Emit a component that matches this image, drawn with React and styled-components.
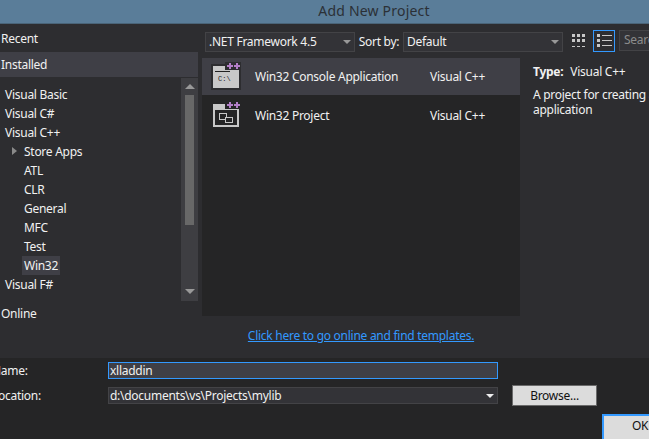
import React from "react";
import styled, { createGlobalStyle } from "styled-components";

const Global = createGlobalStyle`
  html, body { margin: 0; padding: 0; background: #2d2d30; }
  #root { width: 649px; height: 439px; overflow: hidden; }
`;

const Page = styled.div`
  width: 649px;
  height: 439px;
  overflow: hidden;
  display: flex;
  flex-direction: column;
  font-family: "Noto Sans", "Open Sans", sans-serif;
  font-size: 12px;
  letter-spacing: -0.27px;
  line-height: 16px;
  color: #f1f1f1;
  background: #2d2d30;
`;

const TitleBar = styled.header`
  height: 24px;
  flex: none;
  box-sizing: border-box;
  background: #5a7d99;
  border-bottom: 1px solid #4a6478;
  color: #2b3036;
  font-size: 14px;
  letter-spacing: 0.2px;
  line-height: 22px;
  text-align: center;
  padding-left: 99px;
`;

const Main = styled.main`
  height: 334px;
  flex: none;
  display: flex;
`;

const Sidebar = styled.nav`
  width: 198px;
  flex: none;
  display: flex;
  flex-direction: column;
  padding-top: 4px;
`;

const Section = styled.div`
  height: ${(p) => p.$h}px;
  flex: none;
  box-sizing: border-box;
  padding-left: 1px;
  padding-bottom: ${(p) => p.$pb || 0}px;
  display: flex;
  align-items: center;
  background: ${(p) => (p.$active ? "#3f3f46" : "transparent")};
`;

const TreeWrap = styled.div`
  height: 223px;
  flex: none;
  display: flex;
  justify-content: space-between;
  margin-top: 1px;
`;

const Tree = styled.ul`
  list-style: none;
  margin: 0;
  padding: 7px 0 0;
`;

const TreeItem = styled.li`
  height: 19px;
  display: flex;
  align-items: center;
  padding-left: ${(p) => (p.$child ? 24 : 5)}px;
  position: relative;
`;

const ItemLabel = styled.span`
  line-height: 19px;
  ${(p) => p.$selected && `
    background: #3f3f46;
    margin-left: -2px;
    padding: 0 2px;
  `}
`;

const Expander = styled.span`
  position: absolute;
  left: 12px;
  top: 5px;
  width: 0;
  height: 0;
  border-left: 5px solid #8a8a8a;
  border-top: 4.5px solid transparent;
  border-bottom: 4.5px solid transparent;
`;

const Scrollbar = styled.div`
  width: 17px;
  flex: none;
  background: #3e3e42;
  display: flex;
  flex-direction: column;
  align-items: center;
  padding-top: 6px;
  box-sizing: border-box;
`;

const ArrowUp = styled.span`
  width: 0;
  height: 0;
  border-left: 5px solid transparent;
  border-right: 5px solid transparent;
  border-bottom: 5px solid #999;
`;

const ArrowDown = styled.span`
  width: 0;
  height: 0;
  border-left: 5px solid transparent;
  border-right: 5px solid transparent;
  border-top: 5px solid #999;
  margin-top: 64px;
`;

const Thumb = styled.div`
  width: 9px;
  height: 130px;
  background: #686868;
  margin-top: 6px;
`;

const Center = styled.section`
  width: 318px;
  margin-left: 4px;
  flex: none;
  display: flex;
  flex-direction: column;
`;

const Toolbar = styled.div`
  height: 34px;
  flex: none;
  width: 430px;
  padding-left: 3px;
  padding-top: 6px;
  box-sizing: border-box;
  display: flex;
  align-items: flex-start;
  position: relative;
  z-index: 1;
`;

const Combo = styled.div`
  width: ${(p) => p.$w}px;
  height: 20px;
  margin-top: 2px;
  flex: none;
  box-sizing: border-box;
  background: #333337;
  border: 1px solid #434346;
  padding-left: 3px;
  display: flex;
  align-items: center;
  justify-content: space-between;
  line-height: 16px;
`;

const Caret = styled.span`
  width: 0;
  height: 0;
  margin-right: 3px;
  border-left: 4px solid transparent;
  border-right: 4px solid transparent;
  border-top: 4px solid ${(p) => p.$color || "#999"};
`;

const SortLabel = styled.span`
  width: 48px;
  flex: none;
  text-align: center;
  margin-top: 4px;
`;

const GridButton = styled.div`
  margin: 4px 0 0 9px;
  width: 14px;
  height: 14px;
  flex: none;
  display: flex;
`;

const ListButton = styled.div`
  margin: 0 0 0 7px;
  width: 22px;
  height: 22px;
  flex: none;
  box-sizing: border-box;
  border: 1px solid #3399ff;
  display: flex;
  align-items: center;
  justify-content: center;
`;

const SearchBox = styled.div`
  margin: 0 0 0 4px;
  width: 80px;
  height: 21px;
  flex: none;
  box-sizing: border-box;
  background: #333337;
  border: 1px solid #434346;
  padding-left: 4px;
  color: #8c8c8c;
  line-height: 18px;
`;

const TemplateList = styled.div`
  height: 258px;
  flex: none;
  background: #252526;
`;

const TemplateRow = styled.div`
  height: ${(p) => p.$h}px;
  display: flex;
  align-items: flex-start;
  background: ${(p) => (p.$active ? "#3f3f46" : "transparent")};
`;

const IconSlot = styled.div`
  width: 53px;
  flex: none;
  padding: ${(p) => p.$top}px 0 0 9px;
  box-sizing: border-box;
  display: flex;
`;

const TemplateName = styled.span`
  width: 175px;
  flex: none;
  padding-top: ${(p) => p.$top}px;
`;

const TemplateLang = styled.span`
  padding-top: ${(p) => p.$top}px;
`;

const LinkRow = styled.div`
  text-align: center;
  padding-top: 12px;
`;

const OnlineLink = styled.a`
  color: #3399ff;
  text-decoration: underline;
`;

const Details = styled.aside`
  flex: 1;
  min-width: 0;
  padding: 40px 0 0 13px;
  white-space: nowrap;
  overflow: hidden;
`;

const DetailType = styled.div`
  display: flex;
  gap: 7px;
  margin-bottom: 7px;
`;

const Bold = styled.b`
  font-weight: 700;
`;

const Description = styled.p`
  margin: 0;
  line-height: 15px;
`;

const Bottom = styled.footer`
  flex: 1;
  background: #252526;
  position: relative;
  padding-top: 4px;
`;

const FormRow = styled.div`
  height: 25px;
  display: flex;
  align-items: flex-start;
`;

const FieldLabel = styled.label`
  width: 108px;
  flex: none;
  text-indent: -8px;
  line-height: 17px;
`;

const NameInput = styled.div`
  width: 390px;
  height: 17px;
  box-sizing: border-box;
  background: #3f3f46;
  border: 1px solid #3399ff;
  padding-left: 1px;
  line-height: 15px;
`;

const LocationCombo = styled.div`
  width: 390px;
  height: 17px;
  box-sizing: border-box;
  background: #333337;
  border: 1px solid #434346;
  padding-left: 1px;
  line-height: 15px;
  display: flex;
  align-items: center;
  justify-content: space-between;
`;

const DialogButton = styled.button`
  box-sizing: border-box;
  background: #dcdcdc;
  color: #111;
  font: inherit;
  letter-spacing: inherit;
  padding: 0;
  border: 1px solid ${(p) => (p.$primary ? "#3399ff" : "#6a6a6a")};
  border-width: ${(p) => (p.$primary ? "2px 0 0 2px" : "1px")};
`;

const BrowseButton = styled(DialogButton)`
  width: 85px;
  height: 21px;
  margin: -2px 0 0 14px;
`;

const OkButton = styled(DialogButton)`
  position: absolute;
  left: 602px;
  top: 56px;
  width: 60px;
  height: 30px;
  text-align: left;
  padding-left: 28px;
  line-height: 20px;
  padding-bottom: 8px;
`;

const Plus = ({ x, y }) => (
  <>
    <rect x={x - 3} y={y - 1} width="6" height="2" fill="#b37fc8" />
    <rect x={x - 1} y={y - 3} width="2" height="6" fill="#b37fc8" />
  </>
);

const ConsoleIcon = () => (
  <svg width="32" height="30" viewBox="0 0 32 30">
    <rect x="0" y="3" width="30" height="26" fill="#2d2d30" />
    <rect x="2" y="5" width="26" height="22" fill="#c8c8c8" />
    <rect x="4" y="10" width="15" height="1" fill="#222" />
    <text x="7" y="20" fontFamily="Liberation Mono, monospace" fontSize="7" letterSpacing="0" fill="#222">C:\</text>
    <rect x="14" y="1" width="16" height="8" fill="#2d2d30" />
    <Plus x={19} y={5} />
    <Plus x={26} y={5} />
  </svg>
);

const ProjectIcon = () => (
  <svg width="32" height="30" viewBox="0 0 32 30">
    <path d="M2 3h12v5h14v18H2z" fill="#c8c8c8" />
    <rect x="4" y="9" width="22" height="15" fill="#252526" />
    <rect x="8.5" y="12.5" width="7" height="6" fill="none" stroke="#c8c8c8" />
    <rect x="14.5" y="16.5" width="7" height="5" fill="#252526" stroke="#c8c8c8" />
    <rect x="15" y="0" width="14" height="8" fill="#252526" />
    <Plus x={19} y={4} />
    <Plus x={26} y={4} />
  </svg>
);

const GridIcon = () => (
  <svg width="14" height="14" viewBox="0 0 14 14" fill="#c8c8c8">
    {[0, 5, 12].flatMap((y) =>
      [0, 5, 10].map((x) => (
        <rect key={`${x}-${y}`} x={x} y={y} width="3" height={y === 12 ? 1 : 3} />
      ))
    )}
  </svg>
);

const ListIcon = () => (
  <svg width="15" height="14" viewBox="0 0 15 14" fill="#c8c8c8">
    {[1, 6, 11].map((y) => (
      <React.Fragment key={y}>
        <rect x="0" y={y - 1} width="3" height="3" />
        <rect x="5" y={y} width="10" height="1" />
      </React.Fragment>
    ))}
  </svg>
);

const tree = [
  ["Visual Basic"],
  ["Visual C#"],
  ["Visual C++"],
  ["Store Apps", true, true],
  ["ATL", true],
  ["CLR", true],
  ["General", true],
  ["MFC", true],
  ["Test", true],
  ["Win32", true, false, true],
  ["Visual F#"],
];

export default function App() {
  return (
    <Page>
      <Global />
      <TitleBar>Add New Project</TitleBar>
      <Main>
        <Sidebar>
          <Section $h={24} $pb={3}>Recent</Section>
          <Section $h={25} $active>Installed</Section>
          <TreeWrap>
            <Tree>
              {tree.map(([label, child, expander, selected]) => (
                <TreeItem key={label} $child={child}>
                  {expander && <Expander />}
                  <ItemLabel $selected={selected}>{label}</ItemLabel>
                </TreeItem>
              ))}
            </Tree>
            <Scrollbar>
              <ArrowUp />
              <Thumb />
              <ArrowDown />
            </Scrollbar>
          </TreeWrap>
          <Section $h={26}>Online</Section>
        </Sidebar>
        <Center>
          <Toolbar>
            <Combo $w={150}>.NET Framework 4.5<Caret /></Combo>
            <SortLabel>Sort by:</SortLabel>
            <Combo $w={160}>Default<Caret /></Combo>
            <GridButton><GridIcon /></GridButton>
            <ListButton><ListIcon /></ListButton>
            <SearchBox>Search</SearchBox>
          </Toolbar>
          <TemplateList>
            <TemplateRow $h={37} $active>
              <IconSlot $top={3}><ConsoleIcon /></IconSlot>
              <TemplateName $top={11}>Win32 Console Application</TemplateName>
              <TemplateLang $top={11}>Visual C++</TemplateLang>
            </TemplateRow>
            <TemplateRow $h={37}>
              <IconSlot $top={6}><ProjectIcon /></IconSlot>
              <TemplateName $top={13}>Win32 Project</TemplateName>
              <TemplateLang $top={13}>Visual C++</TemplateLang>
            </TemplateRow>
          </TemplateList>
          <LinkRow>
            <OnlineLink href="#">Click here to go online and find templates.</OnlineLink>
          </LinkRow>
        </Center>
        <Details>
          <DetailType><Bold>Type:</Bold><span>Visual C++</span></DetailType>
          <Description>
            A project for creating a Win32 console
            <br />
            application
          </Description>
        </Details>
      </Main>
      <Bottom>
        <FormRow>
          <FieldLabel>Name:</FieldLabel>
          <NameInput>xlladdin</NameInput>
        </FormRow>
        <FormRow>
          <FieldLabel>Location:</FieldLabel>
          <LocationCombo>d:\documents\vs\Projects\mylib<Caret $color="#eee" /></LocationCombo>
          <BrowseButton>Browse...</BrowseButton>
        </FormRow>
        <OkButton $primary>OK</OkButton>
      </Bottom>
    </Page>
  );
}
